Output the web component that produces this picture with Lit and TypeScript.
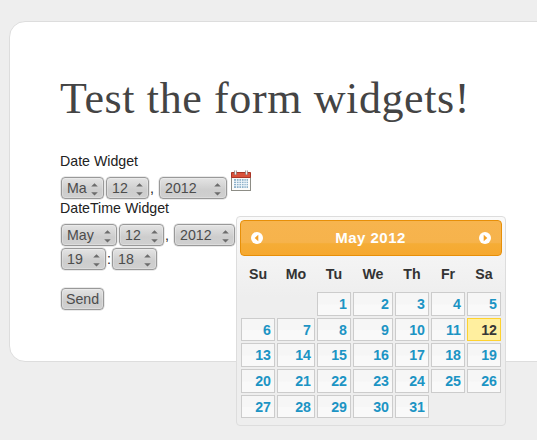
import { LitElement, html, css, svg } from "lit";
import { customElement, property } from "lit/decorators.js";
import { classMap } from "lit/directives/class-map.js";

@customElement("select-box")
class SelectBox extends LitElement {
  @property() value = "";
  @property({ type: Number }) width = 44;

  static styles = css`
    :host { display: block; flex: none; }
    .box {
      box-sizing: border-box; height: 22px; border: 1px solid #999; border-radius: 4px;
      background: linear-gradient(#e4e4e4, #cdcdcd 60%, #d0d0d0);
      box-shadow: inset 0 0 0 1px rgba(255, 255, 255, 0.25), 0 0 0 0.5px rgba(153, 153, 153, 0.4);
      display: flex; align-items: center; justify-content: space-between;
      padding: 0 5px; color: #4c4c4c; font-size: 14.2px; line-height: 20px;
    }
    .label { flex: 1; min-width: 0; white-space: nowrap; }
    svg { display: block; flex: none; margin: 2px 0 0 4px; }
  `;

  render() {
    return html`<div class="box" style="width:${this.width}px">
      <span class="label">${this.value}</span>
      <svg width="7" height="13" viewBox="0 0 7 13" fill="#6c6c6c">
        <path d="M0.2 3.6 3.5 0.2 6.8 3.6zM0.2 9.2 3.5 12.6 6.8 9.2z" />
      </svg>
    </div>`;
  }
}

@customElement("date-picker")
class DatePicker extends LitElement {
  static styles = css`
    :host { display: block; }
    .panel {
      box-sizing: border-box; width: 270px; height: 210px; padding: 3px;
      border: 1px solid #ddd; border-radius: 4px;
      background: linear-gradient(#fafafa, #eee 80px);
      color: #333; font-weight: bold; font-size: 14.2px;
    }
    .header {
      box-sizing: border-box; height: 36px; border: 1px solid #e78f08; border-radius: 4px;
      background: linear-gradient(#f7b44e 0, #f6b34c 63%, #f5ad36 67%, #f6a82f);
      color: #fff; display: flex; align-items: center; justify-content: space-between;
      padding: 0 10px; font-size: 15px; letter-spacing: 0.5px;
    }
    .header svg { display: block; margin-top: -1px; }
    .title { margin-right: 1px; }
    .names, .days {
      display: grid; grid-template-columns: 34px 38px 34px 40px 34px 34px 34px;
      column-gap: 2px; margin-left: 1px;
    }
    .names { height: 36px; line-height: 36px; text-align: center; }
    .days { grid-template-rows: 24px 23px 24px 24px 23px; row-gap: 2px; }
    .day {
      box-sizing: border-box; border: 1px solid #ccc; color: #1c94c4;
      background: linear-gradient(#f6f6f6 0, #f6f6f6 50%, #f9f9f9 55%, #f9f9f9);
      text-align: right; padding-right: 3px; line-height: 23px;
    }
    .today { border-color: #fed22f; background: #ffef9f; color: #363636; }
    .first { grid-column-start: 3; }
  `;

  render() {
    const days = Array.from({ length: 31 }, (_, i) => i + 1);
    return html`<div class="panel">
      <div class="header">
        ${this.arrow("M7.9 3v7L4 6.5z")}
        <span class="title">May 2012</span>
        ${this.arrow("M5.1 3v7L9 6.5z")}
      </div>
      <div class="names">
        ${["Su", "Mo", "Tu", "We", "Th", "Fr", "Sa"].map((n) => html`<span>${n}</span>`)}
      </div>
      <div class="days">
        ${days.map((d) => html`<div class=${classMap({ day: true, first: d === 1, today: d === 12 })}>${d}</div>`)}
      </div>
    </div>`;
  }

  private arrow(d: string) {
    return html`<svg width="12" height="12" viewBox="0 0 13 13">
      <circle cx="6.5" cy="6.5" r="6.5" fill="#fff" />
      ${svg`<path d=${d} fill="#f4a127" />`}
    </svg>`;
  }
}

@customElement("app-root")
class AppRoot extends LitElement {
  static styles = css`
    :host {
      display: block; position: relative; box-sizing: border-box; height: 440px; overflow: hidden;
      padding: 21px 0 0 9px; background: #eee; color: #222;
      font: 14.2px/24px "Liberation Sans", Arial, sans-serif;
    }
    .card {
      box-sizing: border-box; width: 600px; height: 341px; padding: 49px 50px 0;
      background: #fff; border: 1px solid #ddd; border-radius: 16px;
    }
    h1 {
      margin: 0 0 22px; font: normal 44px/56px "Liberation Serif", "Times New Roman", serif;
      letter-spacing: 0.62px; color: #444; white-space: nowrap;
    }
    .caption { height: 28px; line-height: 24px; }
    .second { height: 25px; line-height: 19px; }
    .row { display: flex; height: 22px; line-height: 22px; padding-left: 1px; margin-bottom: 2px; }
    .row.first { margin-bottom: 0; }
    .gap { width: 2px; flex: none; }
    .comma { width: 10px; flex: none; padding-left: 1px; box-sizing: border-box; }
    .colon { width: 6px; flex: none; text-align: center; }
    .calendar { margin: -8px 0 0 3px; flex: none; }
    .send {
      box-sizing: border-box; width: 43px; height: 22px; margin: 18px 0 0 1px; padding: 0;
      border: 1px solid #999; border-radius: 4px; color: #4c4c4c;
      background: linear-gradient(#e4e4e4, #cdcdcd 60%, #d0d0d0);
      box-shadow: inset 0 0 0 1px rgba(255, 255, 255, 0.25), 0 0 0 0.5px rgba(153, 153, 153, 0.4);
      font: 14.2px/20px "Liberation Sans", Arial, sans-serif; display: block;
    }
    date-picker { position: absolute; left: 236px; top: 216px; }
  `;

  render() {
    return html`
      <div class="card">
        <h1>Test the form widgets!</h1>
        <div class="caption">Date Widget</div>
        <div class="row first">
          <select-box value="Ma" width="43"></select-box><span class="gap"></span>
          <select-box value="12" width="43"></select-box><span class="comma">,</span>
          <select-box value="2012" width="68"></select-box>
          <svg class="calendar" width="22" height="23" viewBox="0 0 22 23">
            <rect x="1.5" y="7.5" width="19" height="14" fill="#fcfcfa" stroke="#8d8d86" />
            <path d="M1.5 3.5h19v5h-19z" fill="#d9523c" stroke="#a93425" />
            <path d="M4 10h14v9H4z" fill="#8fb2ca" />
            <path d="M4 12.3h14M4 14.5h14M4 16.7h14M6.5 10v9M9 10v9M11.5 10v9M14 10v9M16.2 10v9" stroke="#f1f7fa" stroke-width=".9" />
            <path d="M5.5 1.5v4.5M16.5 1.5v4.5" stroke="#8a7774" stroke-width="2.6" />
            <path d="M5.5 1v4.5M16.5 1v4.5" stroke="#f2eeee" stroke-width="1.3" />
          </svg>
        </div>
        <div class="caption second">DateTime Widget</div>
        <div class="row">
          <select-box value="May" width="56"></select-box><span class="gap"></span>
          <select-box value="12" width="45"></select-box><span class="comma">,</span>
          <select-box value="2012" width="61"></select-box>
        </div>
        <div class="row">
          <select-box value="19" width="45"></select-box><span class="colon">:</span>
          <select-box value="18" width="45"></select-box>
        </div>
        <button class="send">Send</button>
      </div>
      <date-picker></date-picker>
    `;
  }
}
